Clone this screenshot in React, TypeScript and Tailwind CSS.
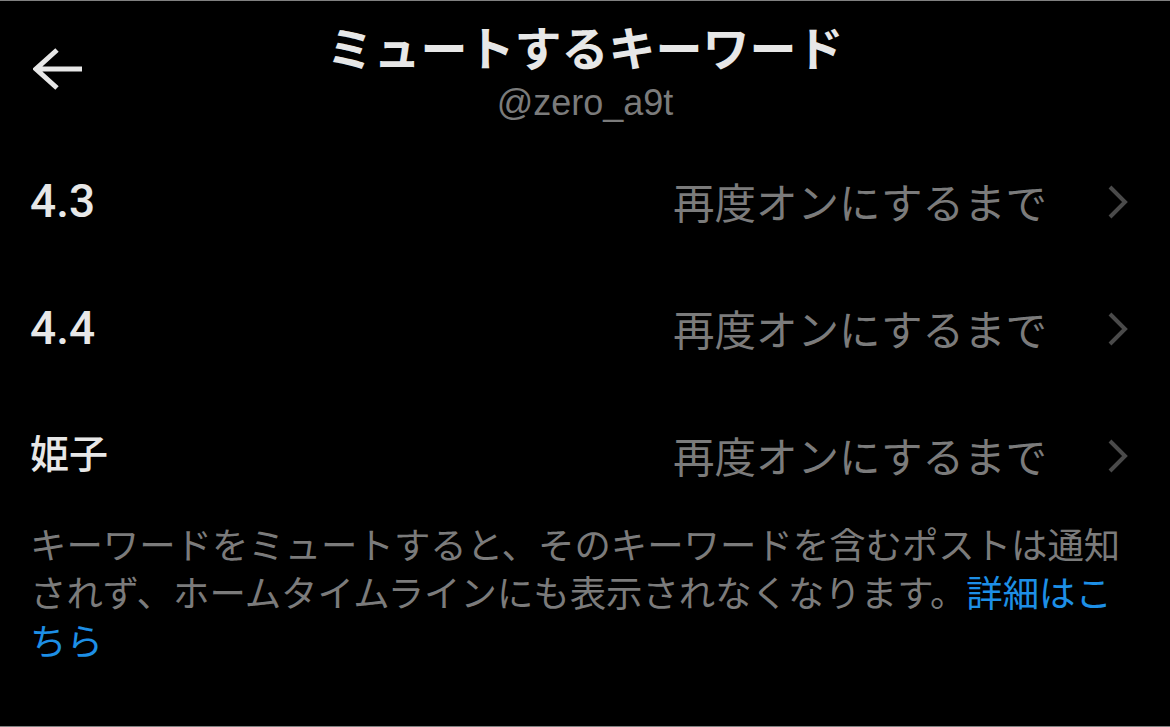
import React from "react";

const jp = {
  fontFamily: '"Noto Sans CJK JP", "Noto Sans", sans-serif',
};

const latin = {
  fontFamily: 'Roboto, "Noto Sans CJK JP", sans-serif',
};

const BackArrow = () => (
  <svg width="52" height="44" viewBox="0 0 52 44" fill="none">
    <path
      d="M24 3 L3 22 L24 41 M3 22 H49"
      stroke="#e7e7e7"
      strokeWidth="5"
      strokeLinejoin="miter"
    />
  </svg>
);

const Chevron = () => (
  <svg width="22" height="34" viewBox="0 0 22 34" fill="none">
    <path d="M3 2 L18 17 L3 32" stroke="#4a4a4a" strokeWidth="4" />
  </svg>
);

const keywords = [
  { label: "4.3", size: "text-[46px]" },
  { label: "4.4", size: "text-[46px]" },
  { label: "姫子", size: "text-[39px]" },
];

const KeywordRow = ({ label, size }: { label: string; size: string }) => (
  <div className="flex h-[127px] items-center justify-between pl-[30px] pr-[41px]">
    <span className={`${size} font-medium text-[#e7e7e7]`} style={latin}>
      {label}
    </span>
    <div className="flex items-center gap-[60px]">
      <span className="text-[41.5px] text-[#7b7b7b]" style={jp}>
        再度オンにするまで
      </span>
      <Chevron />
    </div>
  </div>
);

export default function App() {
  return (
    <div className="flex h-[727px] w-[1170px] flex-col border-y border-[#808080] bg-black">
      <header className="grid h-[137px] grid-cols-[1fr_auto_1fr] items-center">
        <div className="pl-[33px] pb-[2px]">
          <BackArrow />
        </div>
        <div className="flex flex-col items-center pt-[2px]">
          <h1
            className="text-[47px] font-bold leading-[56px] text-[#e7e7e7]"
            style={jp}
          >
            ミュートするキーワード
          </h1>
          <span
            className="mt-[9px] text-[36px] leading-[40px] text-[#7b7b7b]"
            style={{ fontFamily: '"Liberation Sans", Roboto, sans-serif' }}
          >
            @zero_a9t
          </span>
        </div>
        <div />
      </header>

      {keywords.map((k) => (
        <KeywordRow key={k.label} label={k.label} size={k.size} />
      ))}

      <p
        className="px-[30px] text-[36.4px] leading-[48px] text-[#7b7b7b]"
        style={jp}
      >
        キーワードをミュートすると、そのキーワードを含むポストは通知されず、ホームタイムラインにも表示されなくなります。
        <span className="text-[#1d8fe6]">詳細はこちら</span>
      </p>
    </div>
  );
}
